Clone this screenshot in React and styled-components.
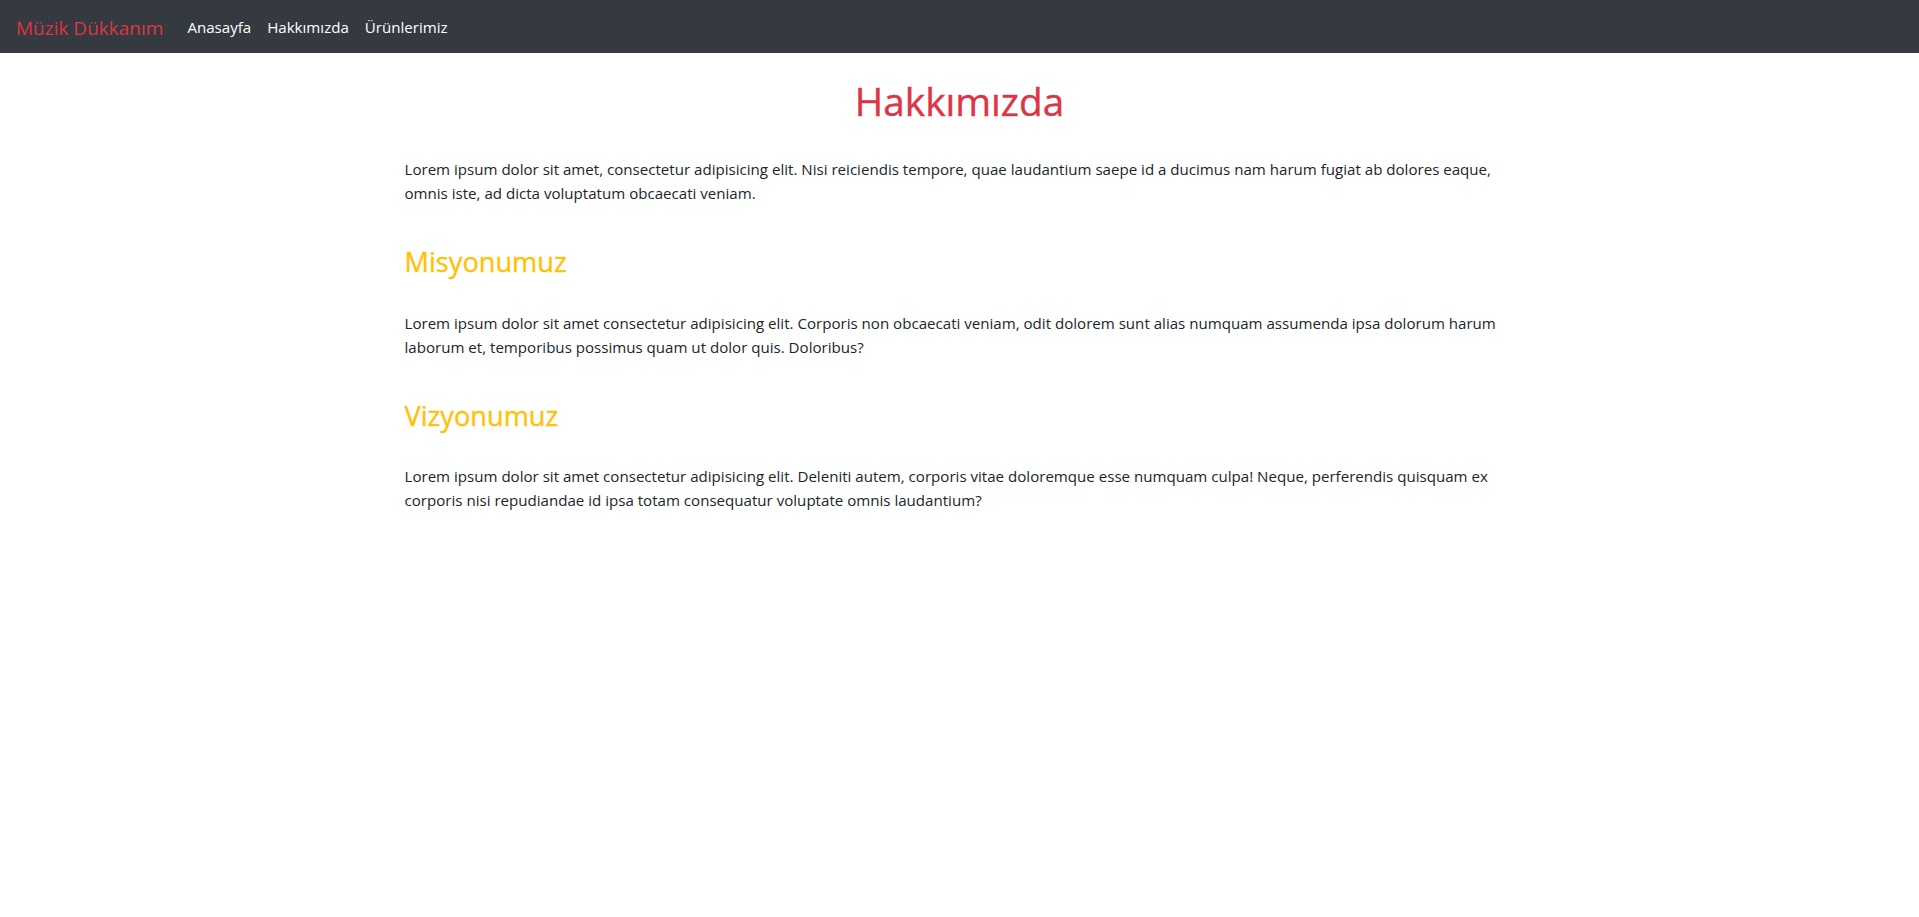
import React from "react";
import styled, { createGlobalStyle } from "styled-components";

const Global = createGlobalStyle`
  * { box-sizing: border-box; }
  html, body { margin: 0; padding: 0; background: #fff; }
  body {
    font-family: "Open Sans", "Noto Sans", sans-serif;
    color: #212529;
    font-size: 15.1px;
    line-height: 24px;
  }
`;

const Navbar = styled.nav`
  height: 53px;
  background: #343a40;
  display: flex;
  align-items: center;
  padding: 0 16px;
`;

const Brand = styled.a`
  color: #dc3545;
  font-size: 19px;
  line-height: 30px;
  margin-right: 16px;
  text-decoration: none;
  padding-top: 2px;
`;

const NavList = styled.ul`
  display: flex;
  list-style: none;
  margin: 0;
  padding: 0;
`;

const NavLink = styled.a`
  display: block;
  color: #fff;
  font-size: 15.1px;
  line-height: 24px;
  padding: 0 8px;
  text-decoration: none;
`;

const Container = styled.main`
  width: 1140px;
  margin: 0 auto;
  padding: 0 15px;
`;

const Title = styled.h1`
  margin: 24px 0 32px;
  text-align: center;
  color: #dc3545;
  font-size: 38.7px;
  font-weight: 500;
  line-height: 48px;
  -webkit-text-stroke: 0.4px #dc3545;
`;

const SectionTitle = styled.h3`
  margin: 40px 0 32px;
  color: #ffc107;
  font-size: 27.2px;
  font-weight: 500;
  line-height: 33.6px;
  -webkit-text-stroke: 0.35px #ffc107;
`;

const Text = styled.p`
  margin: 0 0 16px;
`;

export default function App() {
  return (
    <>
      <Global />
      <Navbar>
        <Brand href="#">Müzik Dükkanım</Brand>
        <NavList>
          <li><NavLink href="#">Anasayfa</NavLink></li>
          <li><NavLink href="#">Hakkımızda</NavLink></li>
          <li><NavLink href="#">Ürünlerimiz</NavLink></li>
        </NavList>
      </Navbar>
      <Container>
        <Title>Hakkımızda</Title>
        <Text>
          Lorem ipsum dolor sit amet, consectetur adipisicing elit. Nisi reiciendis tempore, quae laudantium saepe id a ducimus nam harum fugiat ab dolores eaque, omnis iste, ad dicta voluptatum obcaecati veniam.
        </Text>
        <SectionTitle>Misyonumuz</SectionTitle>
        <Text>
          Lorem ipsum dolor sit amet consectetur adipisicing elit. Corporis non obcaecati veniam, odit dolorem sunt alias numquam assumenda ipsa dolorum harum laborum et, temporibus possimus quam ut dolor quis. Doloribus?
        </Text>
        <SectionTitle>Vizyonumuz</SectionTitle>
        <Text>
          Lorem ipsum dolor sit amet consectetur adipisicing elit. Deleniti autem, corporis vitae doloremque esse numquam culpa! Neque, perferendis quisquam ex corporis nisi repudiandae id ipsa totam consequatur voluptate omnis laudantium?
        </Text>
      </Container>
    </>
  );
}
